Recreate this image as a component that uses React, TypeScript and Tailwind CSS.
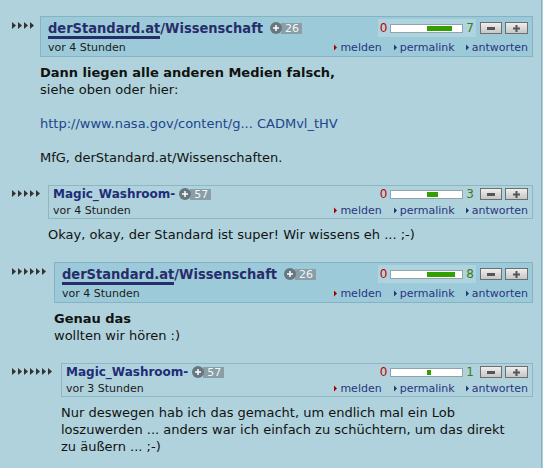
import React from "react";

type Post = {
  depth: number;
  staff: boolean;
  author: string;
  points: number;
  time: string;
  rating: number;
  body: React.ReactNode;
};

// full class names per depth so tailwind picks them up
const gutterClass: Record<number, string> = {
  4: "w-[28px]",
  5: "w-[36px]",
  6: "w-[42px]",
  7: "w-[49px]",
};

const bodyClass: Record<number, string> = {
  4: "pl-[40px]",
  5: "pl-[48px]",
  6: "pl-[54px]",
  7: "pl-[61px]",
};

const posts: Post[] = [
  {
    depth: 4,
    staff: true,
    author: "derStandard.at/Wissenschaft",
    points: 26,
    time: "vor 4 Stunden",
    rating: 7,
    body: (
      <>
        <b>Dann liegen alle anderen Medien falsch,</b>
        <br />
        siehe oben oder hier:
        <br />
        <br />
        <a className="text-[#22458c]">http://www.nasa.gov/content/g... CADMvl_tHV</a>
        <br />
        <br />
        MfG, derStandard.at/Wissenschaften.
      </>
    ),
  },
  {
    depth: 5,
    staff: false,
    author: "Magic_Washroom-",
    points: 57,
    time: "vor 4 Stunden",
    rating: 3,
    body: <>Okay, okay, der Standard ist super! Wir wissens eh ... ;-)</>,
  },
  {
    depth: 6,
    staff: true,
    author: "derStandard.at/Wissenschaft",
    points: 26,
    time: "vor 4 Stunden",
    rating: 8,
    body: (
      <>
        <b>Genau das</b>
        <br />
        wollten wir hören :)
      </>
    ),
  },
  {
    depth: 7,
    staff: false,
    author: "Magic_Washroom-",
    points: 57,
    time: "vor 3 Stunden",
    rating: 1,
    body: (
      <>
        Nur deswegen hab ich das gemacht, um endlich mal ein Lob
        <br />
        loszuwerden ... anders war ich einfach zu schüchtern, um das direkt
        <br />
        zu äußern ... ;-)
      </>
    ),
  },
];

function Arrow({ color = "#333" }: { color?: string }) {
  return (
    <svg width="4" height="7" viewBox="0 0 4 7" className="shrink-0">
      <path d="M0 0L4 3.5L0 7z" fill={color} />
    </svg>
  );
}

function LinkArrow({ color }: { color: string }) {
  return (
    <svg width="3" height="7" viewBox="0 0 3 7" className="mr-[3px] shrink-0">
      <path d="M0 0.5L3 3.5L0 6.5z" fill={color} />
    </svg>
  );
}

function Badge({ points }: { points: number }) {
  return (
    <span className="flex items-center">
      <span className="z-10 flex h-[12px] w-[12px] items-center justify-center rounded-full bg-[#66777f]">
        <svg width="6" height="6" viewBox="0 0 6 6">
          <path d="M2.25 0h1.5v2.25H6v1.5H3.75V6h-1.5V3.75H0v-1.5h2.25z" fill="#fff" />
        </svg>
      </span>
      <span className="-ml-[1px] flex h-[11px] items-center bg-[#899ea6] pl-[4px] pr-[3px] font-['DejaVu_Sans',sans-serif] text-[11px] leading-none text-[#f2f6f7]">
        {points}
      </span>
    </span>
  );
}

function Rating({ value, tinted }: { value: number; tinted: boolean }) {
  return (
    <div
      className={
        tinted
          ? "flex h-[18px] items-center bg-[#afd4df] px-[2px]"
          : "flex h-[18px] items-center px-[2px]"
      }
    >
      <span className="text-[12px] leading-none text-[#c00000]">0</span>
      <div className="ml-[3px] flex h-[9px] w-[73px] items-center border border-[#8fa4ac] bg-white pl-[36px]">
        <div className="h-[5px] bg-[#31a000]" style={{ width: value * 3.5 }} />
      </div>
      <span className="ml-[3px] text-[12px] leading-none text-[#3a7d14]">{value}</span>
    </div>
  );
}

function VoteButtons() {
  return (
    <div className="ml-[4px] flex gap-[3px]">
      <div className="flex h-[12px] w-[22px] items-center justify-center border border-[#6e6e6e] bg-linear-to-b from-[#eeeeee] to-[#c6c6c6]">
        <svg width="8" height="3" viewBox="0 0 8 3">
          <rect width="8" height="3" fill="#555" />
        </svg>
      </div>
      <div className="flex h-[12px] w-[23px] items-center justify-center border border-[#6e6e6e] bg-linear-to-b from-[#eeeeee] to-[#c6c6c6]">
        <svg width="7" height="7" viewBox="0 0 7 7">
          <path d="M2.5 0h2v2.5H7v2H4.5V7h-2V4.5H0v-2h2.5z" fill="#555" />
        </svg>
      </div>
    </div>
  );
}

function Links() {
  return (
    <div className="flex items-center text-[11px] leading-none text-[#283582]">
      <span className="flex items-center">
        <LinkArrow color="#a30000" />
        melden
      </span>
      <span className="ml-[12px] flex items-center">
        <LinkArrow color="#1d3a78" />
        permalink
      </span>
      <span className="ml-[11px] flex items-center">
        <LinkArrow color="#1d3a78" />
        antworten
      </span>
    </div>
  );
}

function Header({ post }: { post: Post }) {
  if (post.staff) {
    return (
      <div className="flex-1 border border-[#86b3c3] bg-[#9dcad8] pl-[7px] pr-[4px]">
        <div className="flex h-[22px] items-center justify-between">
          <div className="flex items-center">
            <span className="font-['Liberation_Sans_Narrow','DejaVu_Sans_Condensed','Liberation_Sans',sans-serif] text-[14.5px] font-bold leading-[15px] text-[#272d6b]">
              <span className="border-b-[3px] border-[#272d6b]">derStandard.at</span>
              /Wissenschaft
            </span>
            <span className="ml-[7px]">
              <Badge points={post.points} />
            </span>
          </div>
          <div className="flex items-center">
            <Rating value={post.rating} tinted />
            <VoteButtons />
          </div>
        </div>
        <div className="flex h-[17px] items-center justify-between">
          <span className="text-[11px] leading-none text-[#1b1b1b]">{post.time}</span>
          <Links />
        </div>
      </div>
    );
  }
  return (
    <div className="flex-1 border border-[#8db7c5] pl-[4px] pr-[4px]">
      <div className="flex h-[16px] items-center justify-between">
        <div className="flex items-center">
          <span className="text-[12px] font-bold leading-none text-[#1f2d78]">{post.author}</span>
          <span className="ml-[4px]">
            <Badge points={post.points} />
          </span>
        </div>
        <div className="flex items-center">
          <Rating value={post.rating} tinted={false} />
          <VoteButtons />
        </div>
      </div>
      <div className="flex h-[16px] items-center justify-between">
        <span className="text-[11px] leading-none text-[#1b1b1b]">{post.time}</span>
        <Links />
      </div>
    </div>
  );
}

function PostItem({ post }: { post: Post }) {
  return (
    <div>
      <div className="flex items-start pl-[12px] pr-[8px]">
        <div className={`${gutterClass[post.depth]} flex shrink-0 gap-[2px] ${post.staff ? "pt-[6px]" : "pt-[5px]"}`}>
          {Array.from({ length: post.depth }).map((_, i) => (
            <Arrow key={i} />
          ))}
        </div>
        <Header post={post} />
      </div>
      <div className={`${bodyClass[post.depth]} pb-[19px] pt-[7px] text-[13px] leading-[17px] text-[#121212]`}>
        {post.body}
      </div>
    </div>
  );
}

export default function App() {
  return (
    <div className="min-h-screen w-[543px] bg-[#afd2dc]">
      <div className="min-h-screen w-[542px] border-r border-[#88adbb] pt-[16px] font-['DejaVu_Sans','Liberation_Sans',sans-serif]">
        {posts.map((p, i) => (
          <PostItem key={i} post={p} />
        ))}
      </div>
    </div>
  );
}
